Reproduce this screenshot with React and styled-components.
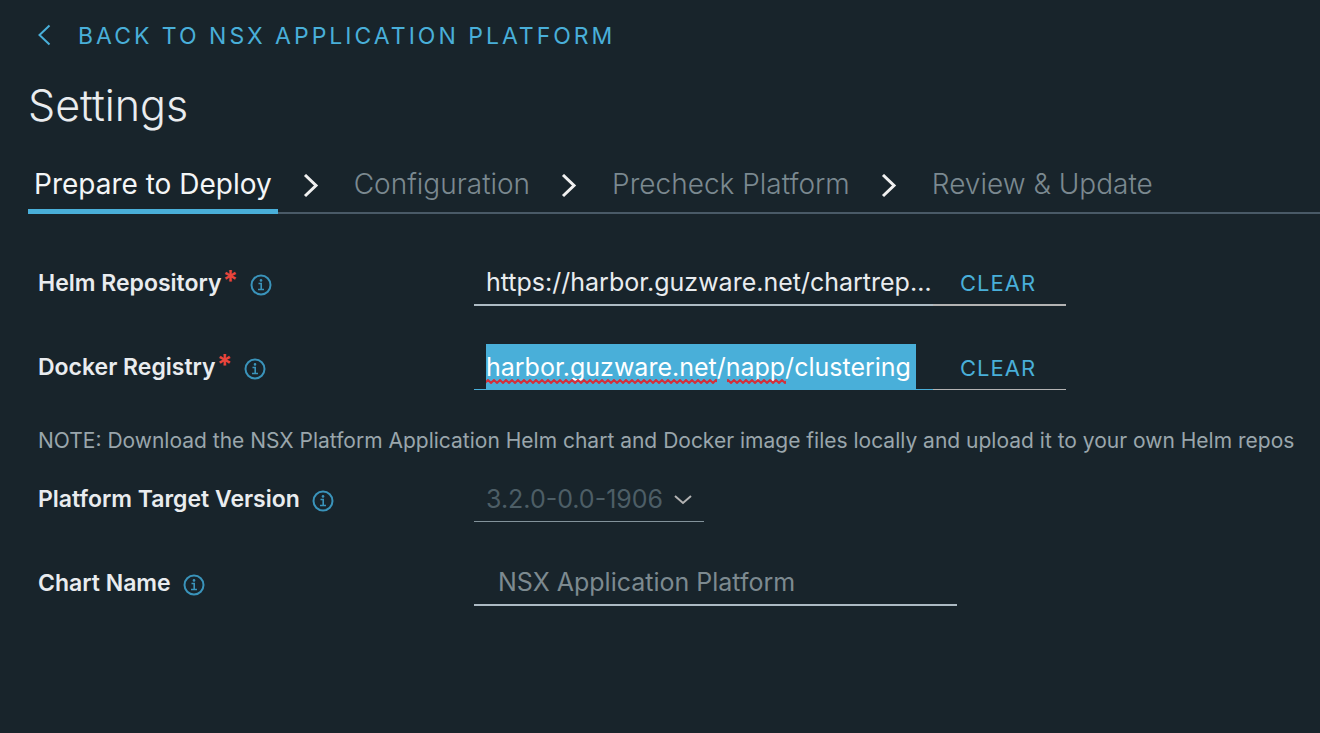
import React, { useEffect, useRef } from "react";
import styled, { createGlobalStyle } from "styled-components";

const GlobalStyle = createGlobalStyle`
  *, *::before, *::after { box-sizing: border-box; }
  html { background: #18242b; }
  body {
    margin: 0;
    background: #18242b;
    color: #e9ecef;
    font-family: Inter, "Open Sans", sans-serif;
    overflow-x: hidden;
  }
  input, select, button { font-family: inherit; }
`;

const Page = styled.main`
  min-height: 100vh;
  padding: 20px 0 40px 28px;
`;

const BackLink = styled.a`
  display: inline-flex;
  align-items: center;
  gap: 26px;
  margin-left: 9px;
  color: #49afd9;
  font-size: 23px;
  line-height: 32px;
  letter-spacing: 3px;
  text-transform: uppercase;
  text-decoration: none;
`;

const BackIcon = styled.svg`
  width: 15px;
  height: 24px;
  fill: none;
  stroke: currentColor;
  stroke-width: 2;
`;

const Title = styled.h1`
  margin: 25px 0 0;
  font-size: 43px;
  line-height: 56px;
  font-weight: 300;
`;

const Steps = styled.ol`
  display: flex;
  align-items: stretch;
  margin: 27px 0 0;
  padding: 0;
  list-style: none;
  border-bottom: 2px solid #495a67;
`;

const Step = styled.li`
  display: flex;
  align-items: center;
`;

const StepButton = styled.button`
  position: relative;
  height: 52px;
  padding: 0 6px 4px;
  border: 0;
  background: none;
  color: ${(p) => (p.$active ? "#f4f6f7" : "#7b8990")};
  font-size: 28px;
  line-height: 36px;
  font-weight: ${(p) => (p.$active ? 400 : 300)};
  white-space: nowrap;

  &::after {
    content: "";
    position: absolute;
    left: 0;
    right: 0;
    bottom: -2px;
    height: ${(p) => (p.$active ? "5px" : "0")};
    background: #49afd9;
  }
`;

const StepArrow = styled.svg`
  width: 16px;
  height: 24px;
  margin: 0 29px 0 25px;
  fill: none;
  stroke: #f0f0f0;
  stroke-width: 3;
`;

const Form = styled.form`
  display: flex;
  flex-direction: column;
  margin-top: 46px;
  padding-left: 10px;
`;

const Row = styled.div`
  display: grid;
  grid-template-columns: 436px minmax(0, 1fr);
  align-items: center;
  min-height: 46px;
  margin-bottom: 38px;
`;

const LabelCell = styled.div`
  display: flex;
  align-items: center;
  gap: 12px;
`;

const Label = styled.label`
  display: flex;
  gap: 1px;
  font-size: 23px;
  line-height: 32px;
  font-weight: 600;
  white-space: nowrap;
`;

const Required = styled.span`
  color: #e8453c;
  font-size: 28px;
  line-height: 28px;
  font-weight: 700;
`;

const InfoButton = styled.button`
  display: flex;
  margin-top: 4px;
  padding: 0;
  border: 0;
  background: none;
  color: #3a94bb;
`;

const Control = styled.div`
  display: flex;
  max-width: 592px;
`;

const FieldBox = styled.div`
  position: relative;
  flex: 1;
  min-width: 0;
`;

const TextInput = styled.input`
  display: block;
  width: 100%;
  height: 46px;
  padding: 0 0 0 12px;
  border: 0;
  border-bottom: 2px solid #adbbc4;
  border-radius: 0;
  outline: 0;
  background: none;
  color: #e9ecef;
  font-size: 25px;
  text-overflow: ellipsis;
`;

const SelectedInput = styled(TextInput)`
  border-bottom: 1px solid #49afd9;
  background: linear-gradient(#49afd9, #49afd9) 12px 0 / 430px 45px no-repeat;

  &::selection {
    background: #49afd9;
    color: #ffffff;
  }
`;

const ClearButton = styled.button`
  width: 133px;
  height: 46px;
  padding: 2px 0 0 27px;
  border: 0;
  border-bottom: ${(p) => (p.$thin ? 1 : 2)}px solid #b3b3b3;
  background: none;
  color: #49afd9;
  font-size: 22px;
  line-height: 32px;
  letter-spacing: 1px;
  text-align: left;
`;

const Spelling = styled.svg`
  position: absolute;
  left: 12px;
  top: 35px;
  width: 305px;
  height: 5px;
  pointer-events: none;
`;

const Note = styled.p`
  margin: 0 0 22px;
  color: #9aa6ac;
  font-size: 21px;
  line-height: 26px;
  font-weight: 400;
  white-space: nowrap;
`;

const SelectBox = styled.div`
  position: relative;
  width: 230px;
`;

const Select = styled.select`
  display: block;
  appearance: none;
  width: 100%;
  height: 45px;
  padding: 0 40px 0 12px;
  border: 0;
  border-bottom: 1px solid #83939b;
  border-radius: 0;
  background: none;
  color: #4d5e66;
  font-size: 25px;
  opacity: 1;
`;

const Caret = styled.svg`
  position: absolute;
  right: 12px;
  top: 17px;
  width: 18px;
  height: 12px;
  fill: none;
  stroke: #b3b3b3;
  stroke-width: 2;
  pointer-events: none;
`;

const ChartInput = styled(TextInput)`
  max-width: 483px;
  padding-left: 24px;
  color: #7d8a90;
  border-bottom-color: #acbac3;
`;

function InfoIcon() {
  return (
    <svg width="22" height="22" viewBox="0 0 22 22" fill="none" stroke="currentColor" strokeWidth="2" aria-hidden="true">
      <circle cx="11" cy="11" r="9.5" />
      <path d="M8.5 9.5h2.7v6M8 15.5h6" strokeWidth="1.6" />
      <circle cx="11" cy="6.4" r="1.3" fill="currentColor" stroke="none" />
    </svg>
  );
}

function FieldLabel({ id, text, required }) {
  return (
    <LabelCell>
      <Label htmlFor={id}>
        {text}
        {required && <Required>*</Required>}
      </Label>
      <InfoButton type="button" aria-label={`About ${text}`}>
        <InfoIcon />
      </InfoButton>
    </LabelCell>
  );
}

const steps = ["Prepare to Deploy", "Configuration", "Precheck Platform", "Review & Update"];

export default function App() {
  const registry = useRef(null);

  useEffect(() => {
    registry.current.focus();
    registry.current.select();
  }, []);

  return (
    <>
      <GlobalStyle />
      <Page>
        <BackLink href="#platform">
          <BackIcon viewBox="0 0 15 24" aria-hidden="true">
            <path d="M12.5 1.5L2.5 11l10 9.5" />
          </BackIcon>
          Back to NSX Application Platform
        </BackLink>
        <Title>Settings</Title>
        <Steps>
          {steps.map((step, i) => (
            <Step key={step}>
              <StepButton type="button" $active={i === 0}>{step}</StepButton>
              {i < steps.length - 1 && (
                <StepArrow viewBox="0 0 16 24" aria-hidden="true">
                  <path d="M2 1l11 10.500L2 22" />
                </StepArrow>
              )}
            </Step>
          ))}
        </Steps>
        <Form onSubmit={(e) => e.preventDefault()}>
          <Row>
            <FieldLabel id="helm" text="Helm Repository" required />
            <Control>
              <FieldBox>
                <TextInput id="helm" type="text" spellCheck={false} defaultValue="https://harbor.guzware.net/chartrepo/napp" />
              </FieldBox>
              <ClearButton type="button">CLEAR</ClearButton>
            </Control>
          </Row>
          <Row>
            <FieldLabel id="docker" text="Docker Registry" required />
            <Control>
              <FieldBox>
                <SelectedInput id="docker" ref={registry} type="text" spellCheck={false} defaultValue="harbor.guzware.net/napp/clustering" />
                <Spelling viewBox="0 0 305 5" aria-hidden="true">
                  <defs>
                    <pattern id="wave" width="6" height="5" patternUnits="userSpaceOnUse">
                      <path d="M-1 4L2 1l3 3L8 1" fill="none" stroke="#d3303a" strokeWidth="2" />
                    </pattern>
                  </defs>
                  <rect width="231" height="5" fill="url(#wave)" />
                  <rect x="241" width="59" height="5" fill="url(#wave)" />
                </Spelling>
              </FieldBox>
              <ClearButton type="button" $thin>CLEAR</ClearButton>
            </Control>
          </Row>
          <Note>
            NOTE: Download the NSX Platform Application Helm chart and Docker image files locally and upload it to your own Helm repos
          </Note>
          <Row>
            <FieldLabel id="version" text="Platform Target Version" />
            <SelectBox>
              <Select id="version" disabled defaultValue="3.2.0-0.0-1906">
                <option>3.2.0-0.0-1906</option>
              </Select>
              <Caret viewBox="0 0 18 12" aria-hidden="true">
                <path d="M1 2l8 7 8-7" />
              </Caret>
            </SelectBox>
          </Row>
          <Row>
            <FieldLabel id="chart" text="Chart Name" />
            <ChartInput id="chart" type="text" spellCheck={false} defaultValue="NSX Application Platform" />
          </Row>
        </Form>
      </Page>
    </>
  );
}
